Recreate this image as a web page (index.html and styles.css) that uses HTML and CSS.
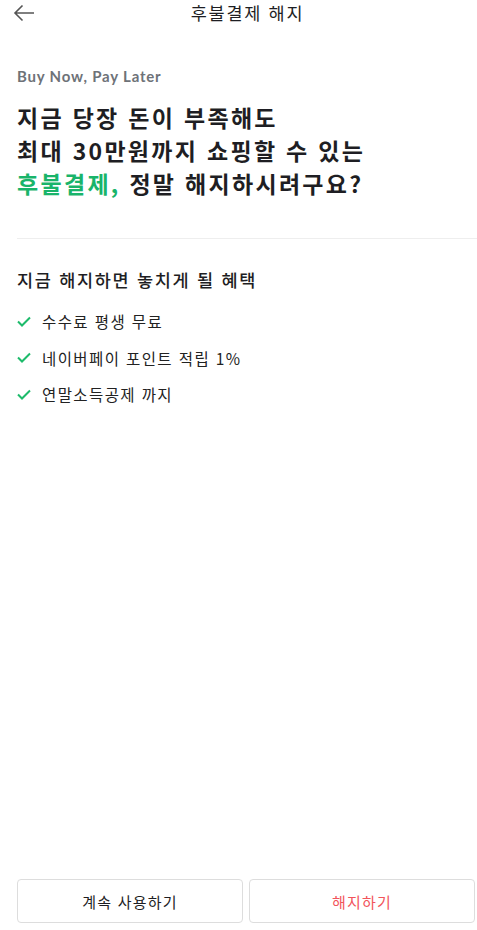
FILE: index.html
```html
<!DOCTYPE html>
<html lang="ko">
<head>
<meta charset="utf-8">
<title>후불결제 해지</title>
<link rel="stylesheet" href="styles.css">
</head>
<body>
<div class="page">
  <header class="header">
    <button class="back" aria-label="뒤로">
      <svg width="22" height="18" viewBox="0 0 22 18"><path d="M21 9H2M9.5 1.5L2 9l7.5 7.5" fill="none" stroke="#555" stroke-width="1.6"/></svg>
    </button>
    <h1 class="title">후불결제 해지</h1>
  </header>
  <main class="main">
    <p class="eyebrow">Buy Now, Pay Later</p>
    <h2 class="headline">지금 당장 돈이 부족해도<br>최대 30만원까지 쇼핑할 수 있는<br><span class="accent">후불결제,</span> 정말 해지하시려구요?</h2>
    <hr class="divider">
    <h3 class="subhead">지금 해지하면 놓치게 될 혜택</h3>
    <ul class="benefits">
      <li class="benefit"><svg class="check" width="14" height="11" viewBox="0 0 14 11"><path d="M1 5.5l4 4L13 1.5" fill="none" stroke="#1dbb6b" stroke-width="2"/></svg>수수료 평생 무료</li>
      <li class="benefit"><svg class="check" width="14" height="11" viewBox="0 0 14 11"><path d="M1 5.5l4 4L13 1.5" fill="none" stroke="#1dbb6b" stroke-width="2"/></svg>네이버페이 포인트 적립 1%</li>
      <li class="benefit"><svg class="check" width="14" height="11" viewBox="0 0 14 11"><path d="M1 5.5l4 4L13 1.5" fill="none" stroke="#1dbb6b" stroke-width="2"/></svg>연말소득공제 까지</li>
    </ul>
  </main>
  <footer class="actions">
    <button class="btn">계속 사용하기</button>
    <button class="btn btn-danger">해지하기</button>
  </footer>
</div>
</body>
</html>
```
FILE: styles.css
```css
* { box-sizing: border-box; }
html, body { margin: 0; padding: 0; background: #fff; }
body {
  font-family: "Noto Sans CJK KR", "Noto Sans", sans-serif;
  color: #1e1e23;
}
.page {
  width: 477px;
  height: 930px;
  display: flex;
  flex-direction: column;
}
.header {
  height: 26px;
  display: flex;
  align-items: center;
}
.back {
  margin-left: 13px;
  width: 22px;
  height: 18px;
  padding: 0;
  border: 0;
  background: none;
  display: flex;
}
.title {
  flex: 1;
  margin: 0;
  padding-right: 17px;
  text-align: center;
  font-size: 17.5px;
  font-weight: 400;
  line-height: 26px;
  letter-spacing: 1.7px;
  color: #1e1e23;
}
.main {
  flex: 1;
  padding-left: 17px;
}
.eyebrow {
  margin: 40px 0 0;
  font-family: "Lato", sans-serif;
  font-weight: 700;
  font-size: 15px;
  line-height: 20px;
  color: #6e7278;
  letter-spacing: 0.8px;
}
.headline {
  margin: 15px 0 0;
  font-size: 23px;
  font-weight: 700;
  line-height: 33px;
  letter-spacing: 2.3px;
  color: #1e1e23;
}
.accent { color: #19b46a; }
.divider {
  margin: 38px 0 0;
  border: 0;
  height: 1px;
  background: #eeeeee;
}
.subhead {
  margin: 29px 0 0;
  font-size: 17.5px;
  font-weight: 500;
  line-height: 24px;
  letter-spacing: 1.7px;
  color: #1e1e23;
}
.benefits {
  list-style: none;
  margin: 17px 0 0;
  padding: 0;
  display: flex;
  flex-direction: column;
  gap: 12.5px;
}
.benefit {
  display: flex;
  align-items: center;
  gap: 11px;
  font-size: 15.5px;
  line-height: 24px;
  letter-spacing: 1.4px;
  color: #222;
}
.check { flex: none; }
.actions {
  display: flex;
  gap: 6px;
  padding: 0 2px 7px 17px;
}
.btn {
  flex: 1;
  height: 44px;
  border: 1px solid #dddddd;
  border-radius: 4px;
  background: #fff;
  font-family: "Noto Sans CJK KR", sans-serif;
  font-size: 15px;
  letter-spacing: 1.2px;
  color: #1e1e23;
}
.btn-danger { color: #f2545b; }
```
